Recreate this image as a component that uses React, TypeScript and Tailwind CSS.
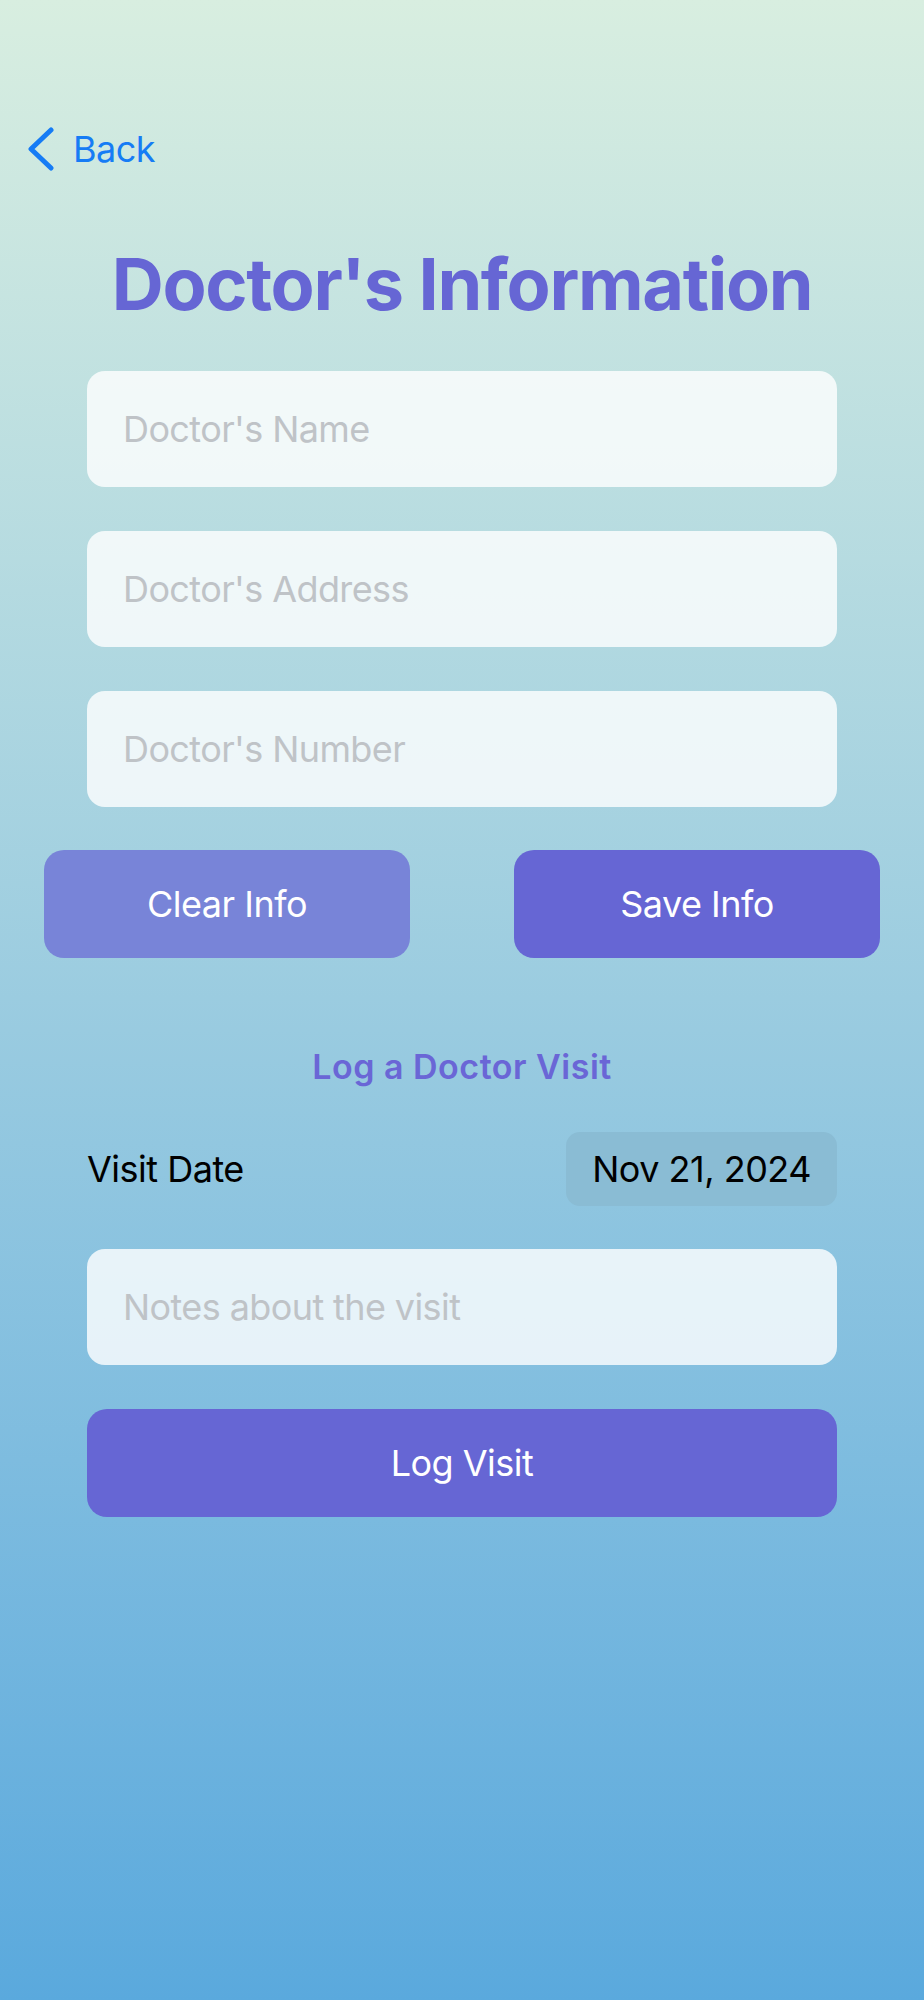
import { useState } from "react";

const font = { fontFamily: "Inter, 'Noto Sans', sans-serif" };

function Field({ placeholder, value, onChange }: { placeholder: string; value: string; onChange: (v: string) => void }) {
  return (
    <input
      value={value}
      onChange={(e) => onChange(e.target.value)}
      placeholder={placeholder}
      className="h-[116px] w-full rounded-[18px] bg-white/80 pl-[36px] text-[36px] tracking-[-0.6px] text-black outline-none placeholder:text-[#bfc3c7]"
    />
  );
}

export default function App() {
  const [name, setName] = useState("");
  const [address, setAddress] = useState("");
  const [phone, setPhone] = useState("");
  const [notes, setNotes] = useState("");

  return (
    <div style={font} className="min-h-[2000px] w-full bg-gradient-to-b from-[#d8eee0] to-[#5aa9dd]">
      {/* Nav */}
      <div className="flex items-center pt-[127px] pl-[26px]">
        <button className="flex items-center gap-[17px] text-[#167cf5]">
          <svg width="30" height="44" viewBox="0 0 30 44" fill="none">
            <path d="M25 3 L5 22 L25 41" stroke="currentColor" strokeWidth="5" strokeLinecap="round" strokeLinejoin="round" />
          </svg>
          <span className="text-[36px] leading-[42px] tracking-[-0.5px]">Back</span>
        </button>
      </div>

      <h1 className="mt-[77px] text-center text-[72px] leading-[72px] font-bold tracking-[-1.35px] text-[#6666d4]">
        Doctor's Information
      </h1>

      <div className="mt-[51px] flex flex-col gap-[44px] px-[87px]">
        <Field placeholder="Doctor's Name" value={name} onChange={setName} />
        <Field placeholder="Doctor's Address" value={address} onChange={setAddress} />
        <Field placeholder="Doctor's Number" value={phone} onChange={setPhone} />
      </div>

      <div className="mt-[43px] flex justify-between px-[44px]">
        <button
          onClick={() => {
            setName("");
            setAddress("");
            setPhone("");
          }}
          className="h-[108px] w-[366px] rounded-[20px] bg-[#7884d8] text-[36px] tracking-[-0.5px] text-white"
        >
          Clear Info
        </button>
        <button className="h-[108px] w-[366px] rounded-[20px] bg-[#6666d4] text-[36px] tracking-[-0.5px] text-white">
          Save Info
        </button>
      </div>

      <h2 className="mt-[92px] text-center text-[34px] leading-[34px] font-semibold tracking-[0.5px] text-[#6a66d6]">
        Log a Doctor Visit
      </h2>

      <div className="mt-[48px] flex items-center justify-between px-[87px]">
        <span className="text-[36px] tracking-[-0.5px] text-black">Visit Date</span>
        <span className="flex h-[74px] items-center rounded-[14px] bg-[#8abcd4] px-[26px] text-[36px] tracking-[-0.5px] text-black">
          Nov 21, 2024
        </span>
      </div>

      <div className="mt-[43px] flex flex-col gap-[44px] px-[87px]">
        <Field placeholder="Notes about the visit" value={notes} onChange={setNotes} />
        <button className="h-[108px] w-full rounded-[20px] bg-[#6666d4] text-[36px] tracking-[-0.5px] text-white">
          Log Visit
        </button>
      </div>
    </div>
  );
}
